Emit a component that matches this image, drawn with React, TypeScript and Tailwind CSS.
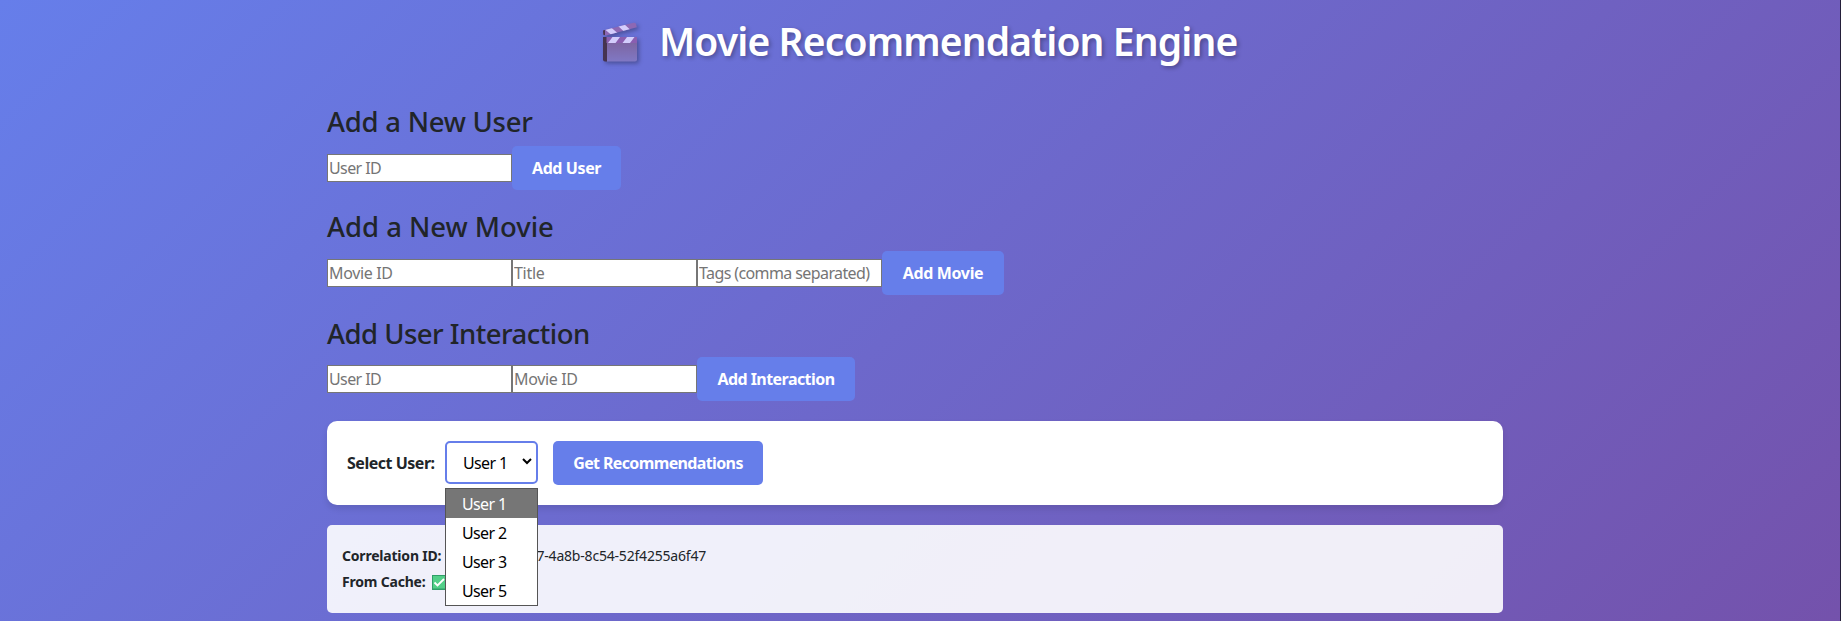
import React from "react";

const F = "font-['Noto_Sans','Open_Sans',sans-serif]";

function Clapper() {
  return (
    <svg width="36" height="42" viewBox="0 0 36 42" className="mr-[21px] mt-px shrink-0 drop-shadow-[2px_2px_2px_rgba(0,0,0,0.3)]">
      <defs>
        <linearGradient id="slate" x1="0" y1="0" x2="0" y2="1">
          <stop offset="0" stopColor="#7c6098" />
          <stop offset="1" stopColor="#8078c4" />
        </linearGradient>
        <clipPath id="arm"><path d="M1 8.600 31.500 .8q2-.4 2.500 1.300l.8 3.200L4 13.500 1.300 12.800Z" /></clipPath>
        <clipPath id="bar"><path d="M4.500 15H35V21H4.500Z" /></clipPath>
      </defs>
      <path d="M1 15h4V39.500H3q-2 0-2-2Z" fill="#453350" />
      <path d="M5 15h30V37.500q0 2-2 2H5Z" fill="url(#slate)" />
      <g clipPath="url(#arm)">
        <path d="M0 0h36v15H0Z" fill="#8d68b4" />
        <path d="M3 7.500 8.500 5 15.500 11l-6 2ZM15.500 3.500l6-2 7 6.500-6 2Z" fill="#d3cdfc" />
        <path d="M0 8h3v7H0Z" fill="#453350" />
      </g>
      <g clipPath="url(#bar)">
        <path d="M4 15h32v6H4Z" fill="#8a5eb0" />
        <path d="M10.500 15h7.500l-4.500 6H6ZM25 15h7.500L28 21h-7.500Z" fill="#d3cdfc" />
      </g>
    </svg>
  );
}

function Button({ label, width, text }: { label: string; width: string; text: string }) {
  return (
    <button className={`flex h-11 shrink-0 items-center justify-center whitespace-nowrap rounded-[5px] bg-[#667eea] font-bold text-white ${width} ${text}`}>
      {label}
    </button>
  );
}

function Field({ placeholder, text }: { placeholder: string; text: string }) {
  return (
    <input
      placeholder={placeholder}
      className={`h-7 w-[185px] shrink-0 border border-[#767676] bg-white px-px text-black placeholder:text-[#757575] ${text}`}
    />
  );
}

function Heading({ children, text }: { children: string; text: string }) {
  return <h3 className={`mb-2 h-[33.6px] whitespace-nowrap pt-px text-[27.500px] font-medium leading-[33.6px] text-[#212529] ${text}`}>{children}</h3>;
}

export default function App() {
  return (
    <div className={`h-[621px] overflow-hidden border-r border-[#241f3a] bg-[linear-gradient(135deg,#667eea_0%,#764ba2_100%)] bg-[length:100%_1000px] bg-no-repeat text-[16px] text-[#212529] ${F}`}>
      <h1 className="flex h-[104.400px] items-start pl-[602px] pt-[21px] text-[39px] font-semibold leading-[40px] text-white [text-shadow:2px_2px_4px_rgba(0,0,0,0.3)]">
        <Clapper />
        <span className="whitespace-nowrap tracking-[-0.87px]">Movie Recommendation Engine</span>
      </h1>
      <main className="ml-[327px] w-[1176px]">
        <section className="mb-[19.400px]">
          <Heading text="tracking-[-0.25px]">Add a New User</Heading>
          <div className="flex items-center">
            <Field placeholder="User ID" text="tracking-[-0.6px]" />
            <Button label="Add User" width="w-[109px]" text="tracking-[-0.4px]" />
          </div>
        </section>
        <section className="mb-[20.600px]">
          <Heading text="tracking-[-0.03px]">Add a New Movie</Heading>
          <div className="flex items-center">
            <Field placeholder="Movie ID" text="tracking-[-0.35px]" />
            <Field placeholder="Title" text="tracking-[-0.3px]" />
            <Field placeholder="Tags (comma separated)" text="tracking-[-0.6px]" />
            <Button label="Add Movie" width="w-[122px]" text="tracking-[-0.35px]" />
          </div>
        </section>
        <section className="mb-5">
          <Heading text="tracking-[-0.52px]">Add User Interaction</Heading>
          <div className="flex items-center">
            <Field placeholder="User ID" text="tracking-[-0.6px]" />
            <Field placeholder="Movie ID" text="tracking-[-0.35px]" />
            <Button label="Add Interaction" width="w-[158px]" text="tracking-[-0.55px]" />
          </div>
        </section>
        <div className="mb-5 flex h-[84px] items-center rounded-[10px] bg-white px-5 shadow-[0_4px_6px_rgba(0,0,0,0.1)]">
          <label className="w-[98px] whitespace-nowrap font-bold tracking-[-0.48px]">Select User:</label>
          <div className="relative mb-px h-[43px] w-[93px]">
            <div className="flex h-full items-center justify-between rounded-[5px] border-2 border-[#667eea] bg-white pl-4 pr-1 text-black">
              <span className="whitespace-nowrap pt-px tracking-[-0.65px]">User 1</span>
              <svg width="10" height="8" viewBox="0 0 10 8" className="mb-1" fill="none" stroke="#000" strokeWidth="2"><path d="m1 2 4 4 4-4" /></svg>
            </div>
            <ul className="absolute left-0 top-[47px] z-10 w-[93px] border border-[#555] bg-white leading-[31px] tracking-[-0.65px] text-black">
              <li className="h-[29px] bg-[#767676] pl-4 text-white">User 1</li>
              <li className="h-[29px] pl-4">User 2</li>
              <li className="h-[29px] pl-4">User 3</li>
              <li className="h-[29px] pl-4">User 5</li>
            </ul>
          </div>
          <div className="ml-[15px]">
            <Button label="Get Recommendations" width="w-[210px]" text="tracking-[-0.63px]" />
          </div>
        </div>
        <div className="h-[88px] rounded-[5px] bg-white/90 px-[15px] pt-[18px] text-[14px] leading-[26px]">
          <p className="flex w-[364px] justify-between whitespace-nowrap tracking-[-0.2px]">
            <b>Correlation ID:</b>
            <span>7-4a8b-8c54-52f4255a6f47</span>
          </p>
          <p className="flex items-center whitespace-nowrap">
            <b className="w-[90px] tracking-[-0.2px]">From Cache:</b>
            <svg width="15" height="15" viewBox="0 0 15 15"><path d="M0 0h15v15H0Z" fill="#2f9e68" /><path d="M1 1h14v12.500H1Z" fill="#52cf88" /><path d="m2.500 7.500 3 3L12 4" fill="none" stroke="#fff" strokeWidth="1.800" /></svg>
          </p>
        </div>
      </main>
    </div>
  );
}
